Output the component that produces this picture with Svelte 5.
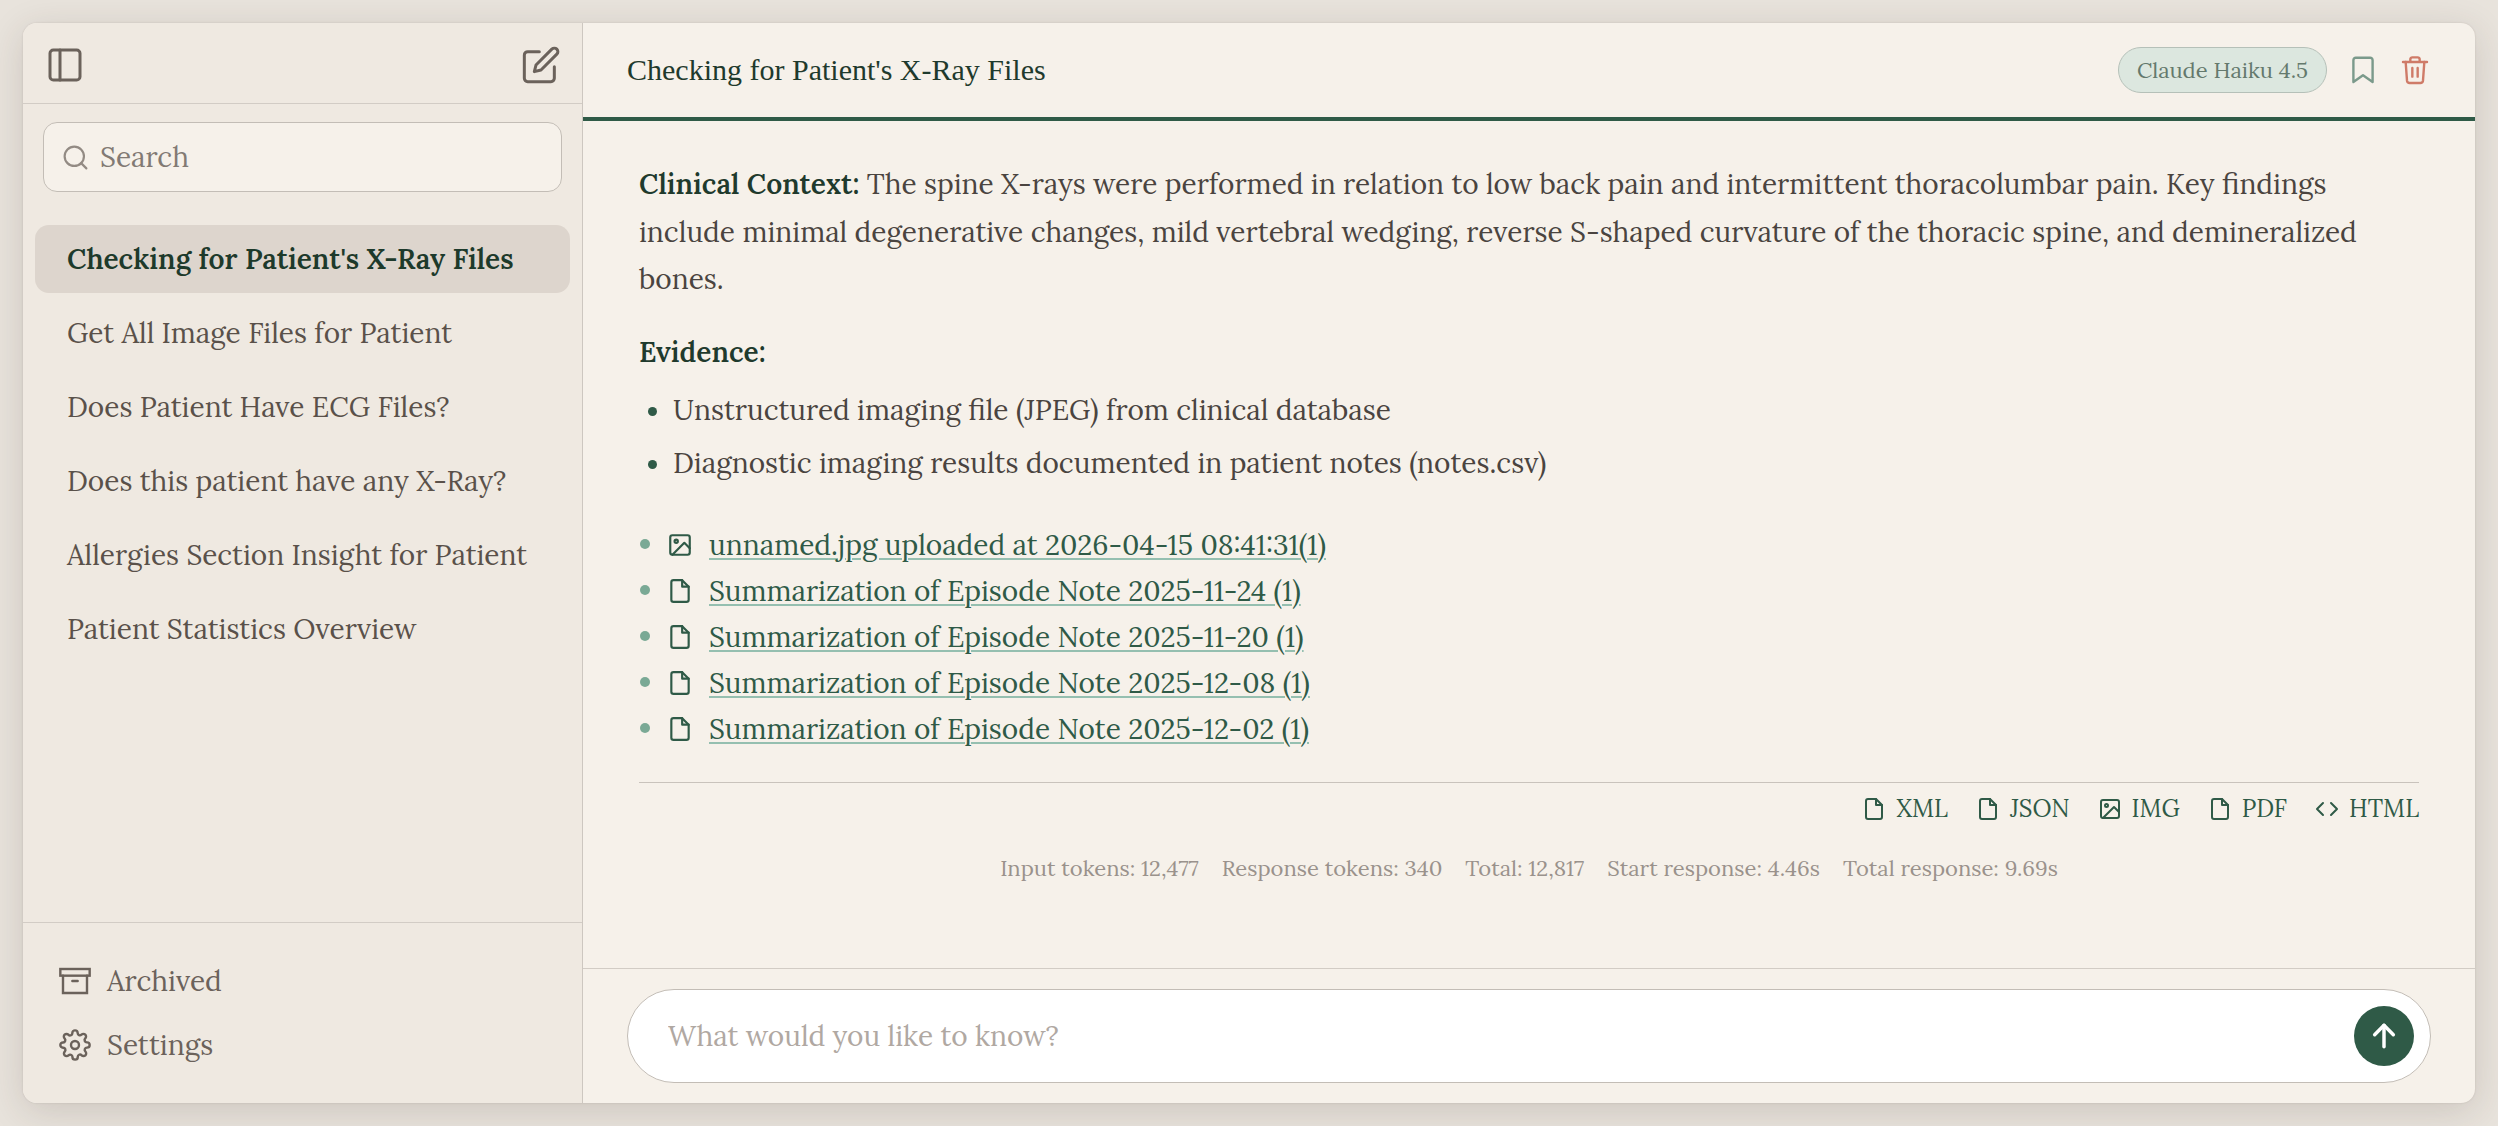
<script lang="ts">
	type IconName = 'file' | 'image' | 'code';

	const chats = [
		"Checking for Patient's X-Ray Files",
		'Get All Image Files for Patient',
		'Does Patient Have ECG Files?',
		'Does this patient have any X-Ray?',
		'Allergies Section Insight for Patient',
		'Patient Statistics Overview'
	];

	const evidence = [
		'Unstructured imaging file (JPEG) from clinical database',
		'Diagnostic imaging results documented in patient notes (notes.csv)'
	];

	const sources: { icon: IconName; label: string }[] = [
		{ icon: 'image', label: 'unnamed.jpg uploaded at 2026-04-15 08:41:31(1)' },
		{ icon: 'file', label: 'Summarization of Episode Note 2025-11-24 (1)' },
		{ icon: 'file', label: 'Summarization of Episode Note 2025-11-20 (1)' },
		{ icon: 'file', label: 'Summarization of Episode Note 2025-12-08 (1)' },
		{ icon: 'file', label: 'Summarization of Episode Note 2025-12-02 (1)' }
	];

	const exports: { icon: IconName; label: string }[] = [
		{ icon: 'file', label: 'XML' },
		{ icon: 'file', label: 'JSON' },
		{ icon: 'image', label: 'IMG' },
		{ icon: 'file', label: 'PDF' },
		{ icon: 'code', label: 'HTML' }
	];

	const stats = [
		'Input tokens: 12,477',
		'Response tokens: 340',
		'Total: 12,817',
		'Start response: 4.46s',
		'Total response: 9.69s'
	];

	let selected = $state(0);
	let query = $state('');
	let prompt = $state('');
</script>

{#snippet icon(name: IconName)}
	<svg class="icon" viewBox="0 0 24 24">
		{#if name === 'file'}
			<path d="M14 2H6a2 2 0 0 0-2 2v16a2 2 0 0 0 2 2h12a2 2 0 0 0 2-2V8z" />
			<polyline points="14 2 14 8 20 8" />
		{:else if name === 'image'}
			<rect x="3" y="3" width="18" height="18" rx="2" />
			<circle cx="8.5" cy="8.5" r="1.5" />
			<polyline points="21 15 16 10 5 21" />
		{:else}
			<polyline points="16 18 22 12 16 6" />
			<polyline points="8 6 2 12 8 18" />
		{/if}
	</svg>
{/snippet}

<div class="window">
	<aside class="sidebar">
		<div class="sidebar-top">
			<button class="icon-btn" aria-label="Toggle sidebar">
				<svg class="icon icon-lg" viewBox="0 0 24 24">
					<rect x="3" y="3" width="18" height="18" rx="2" />
					<line x1="9" y1="3" x2="9" y2="21" />
				</svg>
			</button>
			<button class="icon-btn" aria-label="New chat">
				<svg class="icon icon-lg" viewBox="0 0 24 24">
					<path d="M11 4H4a2 2 0 0 0-2 2v14a2 2 0 0 0 2 2h14a2 2 0 0 0 2-2v-7" />
					<path d="M18.5 2.5a2.121 2.121 0 0 1 3 3L12 15l-4 1 1-4 9.5-9.5z" />
				</svg>
			</button>
		</div>

		<label class="search">
			<svg class="icon" viewBox="0 0 24 24">
				<circle cx="11" cy="11" r="8" />
				<line x1="21" y1="21" x2="16.65" y2="16.65" />
			</svg>
			<input type="text" placeholder="Search" bind:value={query} />
		</label>

		<nav class="chats">
			{#each chats as chat, i}
				<button class="chat" class:chat-active={i === selected} onclick={() => (selected = i)}>{chat}</button>
			{/each}
		</nav>

		<div class="sidebar-bottom">
			<button class="menu-btn">
				<svg class="icon archive" viewBox="0 0 24 24">
					<polyline points="21 8 21 21 3 21 3 8" />
					<rect x="1" y="3" width="22" height="5" />
					<line x1="10" y1="12" x2="14" y2="12" />
				</svg>
				Archived
			</button>
			<button class="menu-btn">
				<svg class="icon" viewBox="0 0 24 24">
					<circle cx="12" cy="12" r="3" />
					<path d="M19.4 15a1.65 1.65 0 0 0 .33 1.82l.06.06a2 2 0 0 1 0 2.83 2 2 0 0 1-2.83 0l-.06-.06a1.65 1.65 0 0 0-1.82-.33 1.65 1.65 0 0 0-1 1.51V21a2 2 0 0 1-2 2 2 2 0 0 1-2-2v-.09A1.65 1.65 0 0 0 9 19.4a1.65 1.65 0 0 0-1.82.33l-.06.06a2 2 0 0 1-2.83 0 2 2 0 0 1 0-2.83l.06-.06a1.65 1.65 0 0 0 .33-1.82 1.65 1.65 0 0 0-1.51-1H3a2 2 0 0 1-2-2 2 2 0 0 1 2-2h.09A1.65 1.65 0 0 0 4.6 9a1.65 1.65 0 0 0-.33-1.82l-.06-.06a2 2 0 0 1 0-2.83 2 2 0 0 1 2.83 0l.06.06a1.65 1.65 0 0 0 1.82.33H9a1.65 1.65 0 0 0 1-1.51V3a2 2 0 0 1 2-2 2 2 0 0 1 2 2v.09a1.65 1.65 0 0 0 1 1.51 1.65 1.65 0 0 0 1.82-.33l.06-.06a2 2 0 0 1 2.83 0 2 2 0 0 1 0 2.83l-.06.06a1.65 1.65 0 0 0-.33 1.82V9a1.65 1.65 0 0 0 1.51 1H21a2 2 0 0 1 2 2 2 2 0 0 1-2 2h-.09a1.65 1.65 0 0 0-1.51 1z" />
				</svg>
				Settings
			</button>
		</div>
	</aside>

	<main class="main">
		<header class="header">
			<h1 class="title">{chats[selected]}</h1>
			<span class="model">Claude Haiku 4.5</span>
			<button class="icon-btn bookmark" aria-label="Bookmark">
				<svg class="icon" viewBox="0 0 24 24">
					<path d="M19.2 21l-7.2-5-7.2 5V4.6a1.8 1.8 0 0 1 1.8-1.8h10.8a1.8 1.8 0 0 1 1.8 1.8z" />
				</svg>
			</button>
			<button class="icon-btn trash" aria-label="Delete chat">
				<svg class="icon" viewBox="0 0 24 24">
					<path d="M3 6h18M8.5 6V4a1.5 1.5 0 0 1 1.5-1.5h4a1.5 1.5 0 0 1 1.5 1.5v2" />
					<path d="M5 6l1 14a2 2 0 0 0 2 1.8h8a2 2 0 0 0 2-1.8l1-14M10 10.5v6.5M14 10.5v6.5" />
				</svg>
			</button>
		</header>

		<section class="content">
			<p class="answer">
				<strong>Clinical Context:</strong> The spine X-rays were performed in relation to low back pain and intermittent thoracolumbar pain. Key findings include minimal degenerative changes, mild vertebral wedging, reverse S-shaped curvature of the thoracic spine, and demineralized bones.
			</p>
			<h2 class="subhead">Evidence:</h2>
			<ul class="evidence">
				{#each evidence as item}
					<li>{item}</li>
				{/each}
			</ul>
			<ul class="sources">
				{#each sources as source}
					<li>
						{@render icon(source.icon)}
						<a href="#source">{source.label}</a>
					</li>
				{/each}
			</ul>
			<div class="exports">
				{#each exports as item}
					<button class="export">{@render icon(item.icon)}{item.label}</button>
				{/each}
			</div>
			<div class="stats">
				{#each stats as stat}
					<span>{stat}</span>
				{/each}
			</div>
		</section>

		<footer class="composer">
			<div class="prompt">
				<input type="text" placeholder="What would you like to know?" bind:value={prompt} />
				<button class="send" aria-label="Send">
					<svg class="icon" viewBox="0 0 24 24">
						<line x1="12" y1="20" x2="12" y2="4" />
						<polyline points="5 11 12 4 19 11" />
					</svg>
				</button>
			</div>
		</footer>
	</main>
</div>

<style>
	:global(body) {
		background: #e8e3dc;
	}

	:global(#app) {
		display: flow-root;
		height: 1126px;
		overflow: hidden;
	}

	.window {
		box-sizing: border-box;
		height: 1080px;
		margin: 23px;
		display: flex;
		border-radius: 14px;
		overflow: hidden;
		background: #f6f1ea;
		box-shadow: 0 8px 36px rgba(60, 45, 35, 0.16), 0 0 2px rgba(60, 45, 35, 0.16);
		font-family: Lora, 'Liberation Serif', serif;
		font-size: 28px;
		color: #4a4440;
	}

	button,
	input {
		border: none;
		padding: 0;
		background: none;
		font: inherit;
		color: inherit;
		outline: none;
	}

	.icon {
		display: block;
		flex: none;
		width: 24px;
		height: 24px;
		fill: none;
		stroke: currentColor;
		stroke-width: 2;
		stroke-linecap: round;
		stroke-linejoin: round;
	}

	.icon-lg {
		width: 40px;
		height: 40px;
		stroke-width: 1.8;
	}

	/* sidebar */

	.sidebar {
		box-sizing: border-box;
		width: 560px;
		flex: none;
		display: flex;
		flex-direction: column;
		background: #efe9e1;
		border-right: 1px solid #cdc7c0;
		color: #6b625b;
	}

	.sidebar-top {
		box-sizing: border-box;
		height: 81px;
		padding: 3px 21px 0 22px;
		display: flex;
		align-items: center;
		justify-content: space-between;
		border-bottom: 1px solid #d2ccc5;
	}

	.search {
		height: 68px;
		margin: 18px 20px 0;
		padding-left: 17px;
		display: flex;
		align-items: center;
		gap: 10px;
		background: #f6f1ea;
		border: 1px solid #c3bdb6;
		border-radius: 14px;
	}

	.search .icon {
		width: 29px;
		height: 29px;
		stroke-width: 1.8;
		color: #938b84;
	}

	.search input {
		flex: 1;
		min-width: 0;
	}

	.search input::placeholder {
		color: #827a74;
	}

	.chats {
		flex: 1;
		padding: 33px 12px 0;
		display: flex;
		flex-direction: column;
		gap: 6px;
	}

	.chat {
		height: 68px;
		padding: 0 32px;
		border-radius: 14px;
		text-align: left;
		white-space: nowrap;
		color: #5a514a;
	}

	.chat-active {
		background: #ddd5cd;
		color: #1d3a2b;
		font-weight: 600;
	}

	.sidebar-bottom {
		box-sizing: border-box;
		height: 181px;
		padding: 26px 36px 0;
		border-top: 1px solid #d2ccc5;
	}

	.menu-btn {
		height: 64px;
		display: flex;
		align-items: center;
		gap: 16px;
	}

	.menu-btn .icon {
		width: 32px;
		height: 32px;
		stroke-width: 1.8;
	}

	.menu-btn .archive {
		stroke-linejoin: miter;
	}

	/* main column */

	.main {
		flex: 1;
		min-width: 0;
		display: flex;
		flex-direction: column;
	}

	.header {
		box-sizing: border-box;
		height: 98px;
		padding: 0 44px;
		display: flex;
		align-items: center;
		border-bottom: 4px solid #2f5a47;
	}

	.title {
		flex: 1;
		margin: 0;
		font-family: 'Liberation Serif', serif;
		font-size: 30px;
		font-weight: 400;
		color: #1f3a2d;
	}

	.model {
		box-sizing: border-box;
		height: 46px;
		width: 209px;
		margin-right: 20px;
		line-height: 44px;
		text-align: center;
		background: #dce7df;
		border: 1px solid #b5c0b8;
		border-radius: 23px;
		font-size: 22px;
		color: #64796d;
	}

	.header .icon {
		width: 32px;
		height: 32px;
		stroke-width: 1.8;
	}

	.bookmark {
		margin-right: 20px;
		color: #7b9a8b;
	}

	.trash {
		color: #cf7b68;
	}

	.content {
		flex: 1;
		min-height: 0;
		padding: 40px 56px 0;
	}

	.answer {
		margin: 0;
		line-height: 47.6px;
	}

	.answer strong,
	.subhead {
		font-weight: 600;
		color: #1f3a2d;
	}

	.subhead {
		margin: 24px 0 0;
		font-size: inherit;
		line-height: 48px;
	}

	.evidence,
	.sources {
		margin: 0;
		padding: 0;
		list-style: none;
	}

	.evidence {
		margin-top: 8px;
	}

	.evidence li {
		height: 53px;
		display: flex;
		align-items: center;
	}

	.evidence li::before {
		content: '';
		width: 9px;
		height: 9px;
		margin: 3px 16px 0 9px;
		border-radius: 50%;
		background: #2f5a47;
	}

	.sources {
		margin-top: 32px;
	}

	.sources li {
		height: 46px;
		display: flex;
		align-items: center;
		color: #2f5a47;
	}

	.sources li::before {
		content: '';
		width: 10px;
		height: 10px;
		margin: 0 17px 1px 1px;
		border-radius: 50%;
		background: #7aa995;
	}

	.sources .icon {
		margin-right: 16px;
		width: 26px;
		height: 26px;
	}

	.sources a {
		color: inherit;
		text-decoration: underline;
		text-decoration-color: #95bfb0;
		text-decoration-thickness: 2px;
		text-underline-offset: 3px;
	}

	.exports {
		margin-top: 30px;
		padding-top: 6px;
		display: flex;
		justify-content: flex-end;
		gap: 28px;
		border-top: 1px solid #c9c3bc;
	}

	.export {
		height: 40px;
		display: flex;
		align-items: center;
		gap: 10px;
		font-size: 24px;
		color: #2f5a47;
	}

	.stats {
		margin-top: 24px;
		display: flex;
		justify-content: center;
		gap: 23px;
		font-size: 22px;
		line-height: 30px;
		color: #9a928c;
	}

	.composer {
		box-sizing: border-box;
		height: 135px;
		padding: 20px 44px 0;
		border-top: 1px solid #d2ccc5;
	}

	.prompt {
		box-sizing: border-box;
		height: 94px;
		padding: 0 16px 0 40px;
		display: flex;
		align-items: center;
		background: #fff;
		border: 1px solid #c3bdb6;
		border-radius: 47px;
	}

	.prompt input {
		flex: 1;
	}

	.prompt input::placeholder {
		color: #b0a8a2;
	}

	.send {
		width: 60px;
		height: 60px;
		display: grid;
		place-items: center;
		border-radius: 50%;
		background: #2f5a47;
		color: #fff;
	}

	.send .icon {
		width: 32px;
		height: 32px;
		stroke-width: 2.6;
	}
</style>
